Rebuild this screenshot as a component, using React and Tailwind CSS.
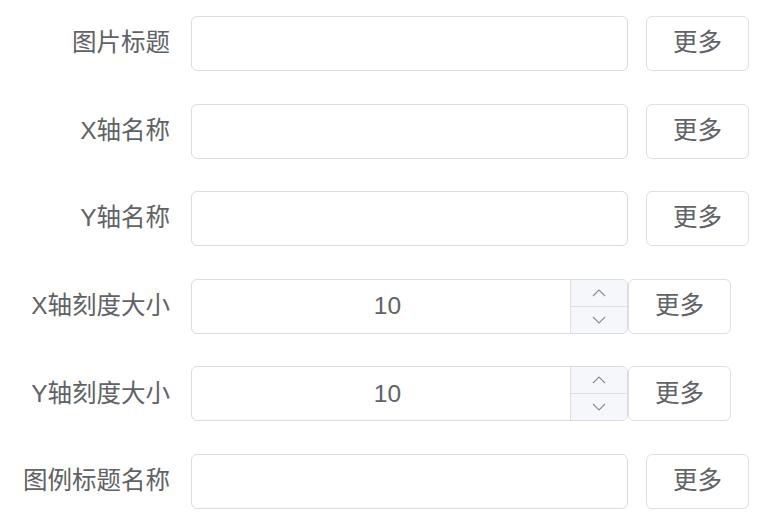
import React from 'react';

const FONT = { fontFamily: '"Liberation Sans", "Noto Sans CJK SC", sans-serif' };

const rows = [
  { label: '图片标题', type: 'text' },
  { label: 'X轴名称', type: 'text' },
  { label: 'Y轴名称', type: 'text' },
  { label: 'X轴刻度大小', type: 'number', value: 10 },
  { label: 'Y轴刻度大小', type: 'number', value: 10 },
  { label: '图例标题名称', type: 'text' },
];

function Chevron({ up }) {
  return (
    <svg width="14" height="8" viewBox="0 0 14 8" fill="none" stroke="#8a8d93" strokeWidth="1.1">
      {up ? <path d="M1 7 L7 1 L13 7" /> : <path d="M1 1 L7 7 L13 1" />}
    </svg>
  );
}

function MoreButton({ className = '' }) {
  return (
    <button
      type="button"
      className={`h-[55px] w-[103px] shrink-0 rounded-[6px] border border-[#dcdfe6] bg-white text-[24.5px] text-[#606266] ${className}`}
    >
      更多
    </button>
  );
}

function Row({ row }) {
  return (
    <div className="flex items-center">
      <label className="w-[191px] shrink-0 pr-[21px] text-right text-[24.5px] text-[#606266] leading-none">
        {row.label}
      </label>
      {row.type === 'number' ? (
        <>
          <div className="flex h-[55px] w-[437px] shrink-0 overflow-hidden rounded-[6px] border border-[#d9dce3] bg-white">
            <div className="flex flex-1 items-center justify-center pl-[13px] text-[24.5px] text-[#606266]">{row.value}</div>
            <div className="flex w-[57px] flex-col border-l border-[#dcdfe6] bg-[#f5f7fa]">
              <div className="flex flex-1 items-center justify-center border-b border-[#dcdfe6]">
                <Chevron up />
              </div>
              <div className="flex flex-1 items-center justify-center">
                <Chevron />
              </div>
            </div>
          </div>
          <MoreButton />
        </>
      ) : (
        <>
          <div className="h-[55px] w-[437px] shrink-0 rounded-[6px] border border-[#d9dce3] bg-white" />
          <MoreButton className="ml-[18px]" />
        </>
      )}
    </div>
  );
}

export default function App() {
  return (
    <div className="min-h-[527px] w-[776px] bg-white pt-[16px]" style={FONT}>
      <div className="flex flex-col gap-[32.6px]">
        {rows.map((r) => (
          <Row key={r.label} row={r} />
        ))}
      </div>
    </div>
  );
}
